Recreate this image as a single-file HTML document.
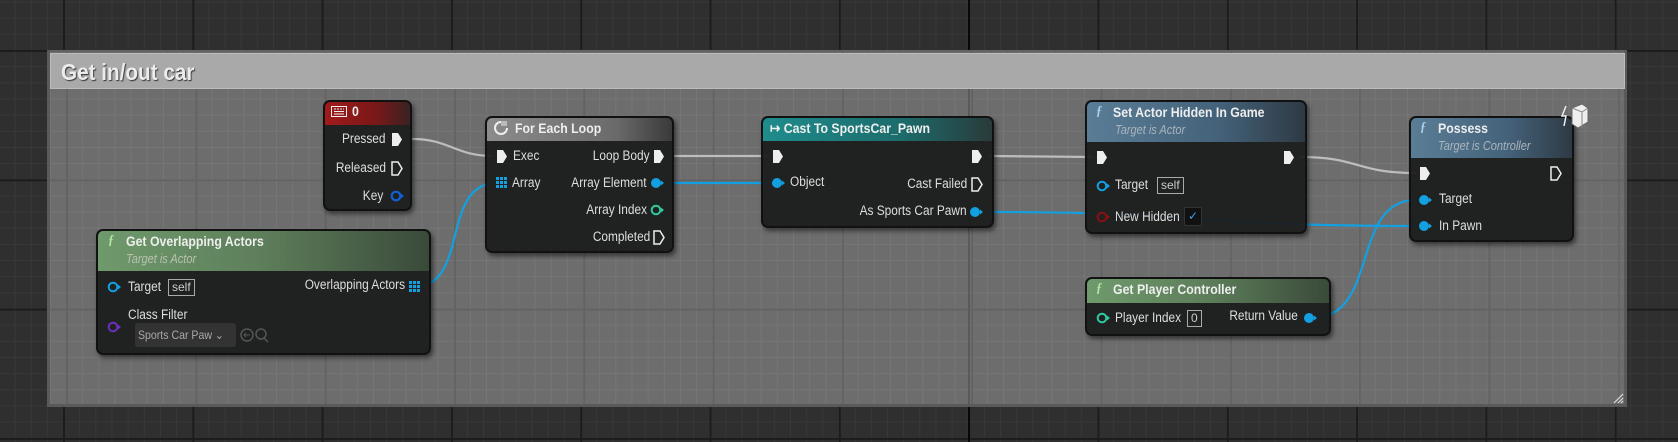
<!DOCTYPE html>
<html><head><meta charset="utf-8"><style>
*{margin:0;padding:0;box-sizing:border-box}
body{width:1678px;height:442px;overflow:hidden;position:relative;font-family:"Liberation Sans",sans-serif;
background-color:#2f2f2f;
background-image:linear-gradient(90deg,#1c1c1c 2px,transparent 2px),linear-gradient(#1c1c1c 2px,transparent 2px),linear-gradient(90deg,#383838 1px,transparent 1px),linear-gradient(#383838 1px,transparent 1px);
background-size:129.3px 129.3px,129.3px 129.3px,16.16px 16.16px,16.16px 16.16px;
background-position:63px 0,0 50px,63px 0,0 50px}
.ax{position:absolute;left:968px;top:0;width:2px;height:442px;background:#080808}
.cm{position:absolute;left:47px;top:50px;width:1580px;height:357px;background-color:#6d6d6d;
background-image:linear-gradient(90deg,#636363 2px,transparent 2px),linear-gradient(#636363 2px,transparent 2px),linear-gradient(90deg,#767676 1px,transparent 1px),linear-gradient(#767676 1px,transparent 1px);
background-size:129.3px 129.3px,129.3px 129.3px,16.16px 16.16px,16.16px 16.16px;
background-position:16px 0,0 0,16px 0,0 0;border:3px solid #5a5a5a;border-top:none}
.cax{position:absolute;left:968px;top:89px;width:2px;height:315px;background:#5a5a5a}
.ch{position:absolute;left:50px;top:53px;width:1575px;height:36px;background:#a9a9a9;border:1px solid #bbb}
.ct{position:absolute;left:61px;top:59px;font-size:23px;font-weight:bold;color:#ececec;text-shadow:1px 1px 1px #333;transform:scaleX(.9);transform-origin:left}
.n{position:absolute;background:rgba(28,29,30,.95);border:2px solid #111;border-radius:7px;box-shadow:2px 3px 5px rgba(0,0,0,.5);overflow:hidden}
.h{position:absolute;left:0;top:0;right:0}
.t{position:absolute;font-size:13.5px;color:#dedede;white-space:nowrap;transform:scaleX(.88);transform-origin:left center;line-height:16px}
.tr{transform-origin:right center}
.b{font-weight:bold;font-size:14px;color:#eee}
.s{font-style:italic;font-size:12.5px;color:#b9c2b0}
.p{position:absolute}
.box{position:absolute;border:1px solid #aaa;color:#ccc;font-size:12px;padding:0 3px;line-height:15px}
</style></head><body>
<div class="ax"></div>
<div class="cm"></div><div class="cax"></div><div class="ch"></div><div class="ct">Get in/out car</div>
<svg width="1678" height="442" style="position:absolute;left:0;top:0">
<g fill="none" stroke-width="2.2">
<path d="M412 139 C450 139 455 156 493 156" stroke="#bdbdbd"/>
<path d="M672 156 L769 156" stroke="#bdbdbd"/>
<path d="M990 156 L1093 157" stroke="#bdbdbd"/>
<path d="M1300 157 C1360 157 1355 173 1416 173" stroke="#bdbdbd"/>
<path d="M414 287 C470 287 440 183 497 183" stroke="#12a0e0"/>
<path d="M672 183 L769 183" stroke="#12a0e0"/>
<path d="M990 212 C1200 212 1200 226 1416 226" stroke="#12a0e0"/>
<path d="M1312 318 C1380 318 1350 200 1416 200" stroke="#12a0e0"/>
</g></svg>

<!-- Key 0 -->
<div class="n" style="left:323px;top:100px;width:89px;height:111px"><div class="h" style="height:23px;background:linear-gradient(90deg,#a11a1a,#7a1818 60%,#3a2222)"></div></div>
<svg class="p" style="left:331px;top:106px" width="16" height="11"><rect x=".5" y=".5" width="15" height="10" fill="none" stroke="#eee"/><path d="M3 3h2M6 3h2M9 3h2M12 3h1M3 5.5h10M3 8h10" stroke="#eee"/></svg>
<div class="t b" style="left:352px;top:103px">0</div>
<div class="t tr" style="right:1292px;top:131px">Pressed</div>
<div class="t tr" style="right:1292px;top:160px">Released</div>
<div class="t tr" style="right:1295px;top:188px">Key</div>
<svg class="p" style="left:391px;top:132px" width="12" height="15"><path d="M1 1h6l4 6.5-4 6.5H1z" fill="#eee"/></svg>
<svg class="p" style="left:391px;top:161px" width="12" height="15"><path d="M1 1h6l4 6.5-4 6.5H1z" fill="none" stroke="#eee" stroke-width="1.5"/></svg>
<svg class="p" style="left:390px;top:190px" width="15" height="12"><circle cx="6" cy="6" r="4.3" fill="none" stroke="#1060d0" stroke-width="2.2"/><path d="M11 3.5l3 2.5-3 2.5z" fill="#1060d0"/></svg>

<!-- For each -->
<div class="n" style="left:485px;top:116px;width:189px;height:137px"><div class="h" style="height:23px;background:linear-gradient(90deg,#8c8c8c,#6a6a6a 70%,#3a3a3a)"></div></div>
<svg class="p" style="left:493px;top:120px" width="16" height="16"><path d="M8 2a6 6 0 1 0 6 6" fill="none" stroke="#eee" stroke-width="2"/><path d="M9 1v5M11 1v5M13 1v5" stroke="#eee"/></svg>
<div class="t b" style="left:515px;top:120px">For Each Loop</div>
<svg class="p" style="left:496px;top:149px" width="12" height="15"><path d="M1 1h6l4 6.5-4 6.5H1z" fill="#eee"/></svg>
<div class="t" style="left:513px;top:148px">Exec</div>
<div class="t tr" style="right:1028px;top:148px">Loop Body</div>
<svg class="p" style="left:653px;top:149px" width="12" height="15"><path d="M1 1h6l4 6.5-4 6.5H1z" fill="#eee"/></svg>
<svg class="p" style="left:496px;top:177px" width="11" height="11"><g fill="#12a0e0"><rect x="0" y="0" width="3" height="3"/><rect x="4" y="0" width="3" height="3"/><rect x="8" y="0" width="3" height="3"/><rect x="0" y="4" width="3" height="3"/><rect x="4" y="4" width="3" height="3"/><rect x="8" y="4" width="3" height="3"/><rect x="0" y="8" width="3" height="3"/><rect x="4" y="8" width="3" height="3"/><rect x="8" y="8" width="3" height="3"/></g></svg>
<div class="t" style="left:512px;top:175px">Array</div>
<div class="t tr" style="right:1031px;top:175px">Array Element</div>
<svg class="p" style="left:650px;top:177px" width="15" height="12"><circle cx="6" cy="6" r="5" fill="#12a0e0"/><path d="M11 3.5l3 2.5-3 2.5z" fill="#12a0e0"/></svg>
<div class="t tr" style="right:1031px;top:202px">Array Index</div>
<svg class="p" style="left:650px;top:204px" width="15" height="12"><circle cx="6" cy="6" r="4.3" fill="none" stroke="#2ec9a0" stroke-width="2"/><path d="M11 3.5l3 2.5-3 2.5z" fill="#2ec9a0"/></svg>
<div class="t tr" style="right:1028px;top:229px">Completed</div>
<svg class="p" style="left:653px;top:230px" width="12" height="15"><path d="M1 1h6l4 6.5-4 6.5H1z" fill="none" stroke="#eee" stroke-width="1.5"/></svg>

<!-- Get overlapping -->
<div class="n" style="left:96px;top:229px;width:335px;height:126px"><div class="h" style="height:40px;background:linear-gradient(90deg,#6f9a6c,#5d7e5a 50%,#3a4a3a)"></div></div>
<div class="t b" style="left:108px;top:233px;font-style:italic;color:#aee6a0;font-family:'Liberation Serif',serif">ƒ</div>
<div class="t b" style="left:126px;top:233px">Get Overlapping Actors</div>
<div class="t s" style="left:126px;top:251px">Target is Actor</div>
<svg class="p" style="left:107px;top:281px" width="15" height="12"><circle cx="6" cy="6" r="4.3" fill="none" stroke="#12a0e0" stroke-width="2"/><path d="M11 3.5l3 2.5-3 2.5z" fill="#12a0e0"/></svg>
<div class="t" style="left:128px;top:279px">Target</div>
<div class="box" style="left:168px;top:279px">self</div>
<div class="t tr" style="right:1273px;top:277px">Overlapping Actors</div>
<svg class="p" style="left:409px;top:281px" width="11" height="11"><g fill="#12a0e0"><rect x="0" y="0" width="3" height="3"/><rect x="4" y="0" width="3" height="3"/><rect x="8" y="0" width="3" height="3"/><rect x="0" y="4" width="3" height="3"/><rect x="4" y="4" width="3" height="3"/><rect x="8" y="4" width="3" height="3"/><rect x="0" y="8" width="3" height="3"/><rect x="4" y="8" width="3" height="3"/><rect x="8" y="8" width="3" height="3"/></g></svg>
<div class="t" style="left:128px;top:307px">Class Filter</div>
<svg class="p" style="left:107px;top:321px" width="15" height="12"><circle cx="6" cy="6" r="4.3" fill="none" stroke="#6a2ec0" stroke-width="2"/><path d="M11 3.5l3 2.5-3 2.5z" fill="#6a2ec0"/></svg>
<div class="p" style="left:135px;top:323px;width:101px;height:24px;background:#333;border-radius:3px"></div>
<div class="t" style="left:138px;top:327px;font-size:12px;color:#aaa">Sports Car Paw ⌄</div>
<svg class="p" style="left:240px;top:327px" width="30" height="16"><circle cx="7" cy="8" r="6" fill="none" stroke="#555" stroke-width="1.5"/><path d="M10 8H4M6 6l-2 2 2 2" stroke="#555" fill="none"/><circle cx="21" cy="7" r="5" fill="none" stroke="#555" stroke-width="1.5"/><path d="M24 11l4 4" stroke="#555" stroke-width="1.5"/></svg>

<!-- Cast -->
<div class="n" style="left:761px;top:116px;width:233px;height:112px"><div class="h" style="height:23px;background:linear-gradient(90deg,#1f8c8c,#1c6c6c 60%,#2a3a3a)"></div></div>
<div class="t b" style="left:770px;top:120px">↦ Cast To SportsCar_Pawn</div>
<svg class="p" style="left:772px;top:149px" width="12" height="15"><path d="M1 1h6l4 6.5-4 6.5H1z" fill="#eee"/></svg>
<svg class="p" style="left:971px;top:149px" width="12" height="15"><path d="M1 1h6l4 6.5-4 6.5H1z" fill="#eee"/></svg>
<svg class="p" style="left:771px;top:177px" width="15" height="12"><circle cx="6" cy="6" r="5" fill="#12a0e0"/><path d="M11 3.5l3 2.5-3 2.5z" fill="#12a0e0"/></svg>
<div class="t" style="left:790px;top:174px">Object</div>
<div class="t tr" style="right:711px;top:176px">Cast Failed</div>
<svg class="p" style="left:971px;top:177px" width="12" height="15"><path d="M1 1h6l4 6.5-4 6.5H1z" fill="none" stroke="#eee" stroke-width="1.5"/></svg>
<div class="t tr" style="right:711px;top:203px">As Sports Car Pawn</div>
<svg class="p" style="left:969px;top:206px" width="15" height="12"><circle cx="6" cy="6" r="5" fill="#12a0e0"/><path d="M11 3.5l3 2.5-3 2.5z" fill="#12a0e0"/></svg>

<!-- Set Actor Hidden -->
<div class="n" style="left:1085px;top:100px;width:222px;height:134px"><div class="h" style="height:40px;background:linear-gradient(90deg,#5a7d96,#44627a 60%,#2e3a44)"></div></div>
<div class="t b" style="left:1096px;top:104px;font-style:italic;color:#a8d0f0;font-family:'Liberation Serif',serif">ƒ</div>
<div class="t b" style="left:1113px;top:104px">Set Actor Hidden In Game</div>
<div class="t s" style="left:1115px;top:122px;color:#a9b4bd">Target is Actor</div>
<svg class="p" style="left:1096px;top:150px" width="12" height="15"><path d="M1 1h6l4 6.5-4 6.5H1z" fill="#eee"/></svg>
<svg class="p" style="left:1283px;top:150px" width="12" height="15"><path d="M1 1h6l4 6.5-4 6.5H1z" fill="#eee"/></svg>
<svg class="p" style="left:1096px;top:180px" width="15" height="12"><circle cx="6" cy="6" r="4.3" fill="none" stroke="#12a0e0" stroke-width="2"/><path d="M11 3.5l3 2.5-3 2.5z" fill="#12a0e0"/></svg>
<div class="t" style="left:1115px;top:177px">Target</div>
<div class="box" style="left:1157px;top:177px">self</div>
<svg class="p" style="left:1096px;top:211px" width="15" height="12"><circle cx="6" cy="6" r="4.3" fill="none" stroke="#8a1010" stroke-width="2"/><path d="M11 3.5l3 2.5-3 2.5z" fill="#8a1010"/></svg>
<div class="t" style="left:1115px;top:209px">New Hidden</div>
<div class="p" style="left:1184px;top:207px;width:18px;height:19px;background:#111;border:1px solid #333;border-radius:2px;color:#3aa0f0;font-size:12px;text-align:center;line-height:17px">✓</div>

<!-- Possess -->
<div class="n" style="left:1409px;top:116px;width:165px;height:126px"><div class="h" style="height:40px;background:linear-gradient(90deg,#5a7d96,#44627a 60%,#2e3a44)"></div></div>
<div class="t b" style="left:1420px;top:120px;font-style:italic;color:#a8d0f0;font-family:'Liberation Serif',serif">ƒ</div>
<div class="t b" style="left:1438px;top:120px">Possess</div>
<div class="t s" style="left:1438px;top:138px;color:#a9b4bd">Target is Controller</div>
<svg class="p" style="left:1558px;top:102px" width="32" height="30"><path d="M14 6l10-4 6 4v14l-10 6-6-4z" fill="#eee" stroke="#666"/><path d="M14 6l10 4 6-4M24 10v16" stroke="#888" fill="none"/><path d="M8 4l-4 10h4l-2 10" stroke="#eee" stroke-width="1.5" fill="none"/></svg>
<svg class="p" style="left:1419px;top:166px" width="12" height="15"><path d="M1 1h6l4 6.5-4 6.5H1z" fill="#eee"/></svg>
<svg class="p" style="left:1550px;top:166px" width="12" height="15"><path d="M1 1h6l4 6.5-4 6.5H1z" fill="none" stroke="#eee" stroke-width="1.5"/></svg>
<svg class="p" style="left:1418px;top:194px" width="15" height="12"><circle cx="6" cy="6" r="5" fill="#12a0e0"/><path d="M11 3.5l3 2.5-3 2.5z" fill="#12a0e0"/></svg>
<div class="t" style="left:1439px;top:191px">Target</div>
<svg class="p" style="left:1418px;top:220px" width="15" height="12"><circle cx="6" cy="6" r="5" fill="#12a0e0"/><path d="M11 3.5l3 2.5-3 2.5z" fill="#12a0e0"/></svg>
<div class="t" style="left:1439px;top:218px">In Pawn</div>

<!-- Get Player Controller -->
<div class="n" style="left:1085px;top:277px;width:246px;height:59px"><div class="h" style="height:24px;background:linear-gradient(90deg,#6f9a6c,#5d7e5a 50%,#3a4a3a)"></div></div>
<div class="t b" style="left:1096px;top:281px;font-style:italic;color:#aee6a0;font-family:'Liberation Serif',serif">ƒ</div>
<div class="t b" style="left:1113px;top:281px">Get Player Controller</div>
<svg class="p" style="left:1096px;top:312px" width="15" height="12"><circle cx="6" cy="6" r="4.3" fill="none" stroke="#2ec9a0" stroke-width="2"/><path d="M11 3.5l3 2.5-3 2.5z" fill="#2ec9a0"/></svg>
<div class="t" style="left:1115px;top:310px">Player Index</div>
<div class="box" style="left:1187px;top:310px">0</div>
<div class="t tr" style="right:380px;top:308px">Return Value</div>
<svg class="p" style="left:1303px;top:312px" width="15" height="12"><circle cx="6" cy="6" r="5" fill="#12a0e0"/><path d="M11 3.5l3 2.5-3 2.5z" fill="#12a0e0"/></svg>

<svg class="p" style="left:1612px;top:392px" width="12" height="12"><path d="M2 11L11 2M6 11l5-5M9 11l2-2" stroke="#ddd" stroke-width="1.2"/></svg>
</body></html>
